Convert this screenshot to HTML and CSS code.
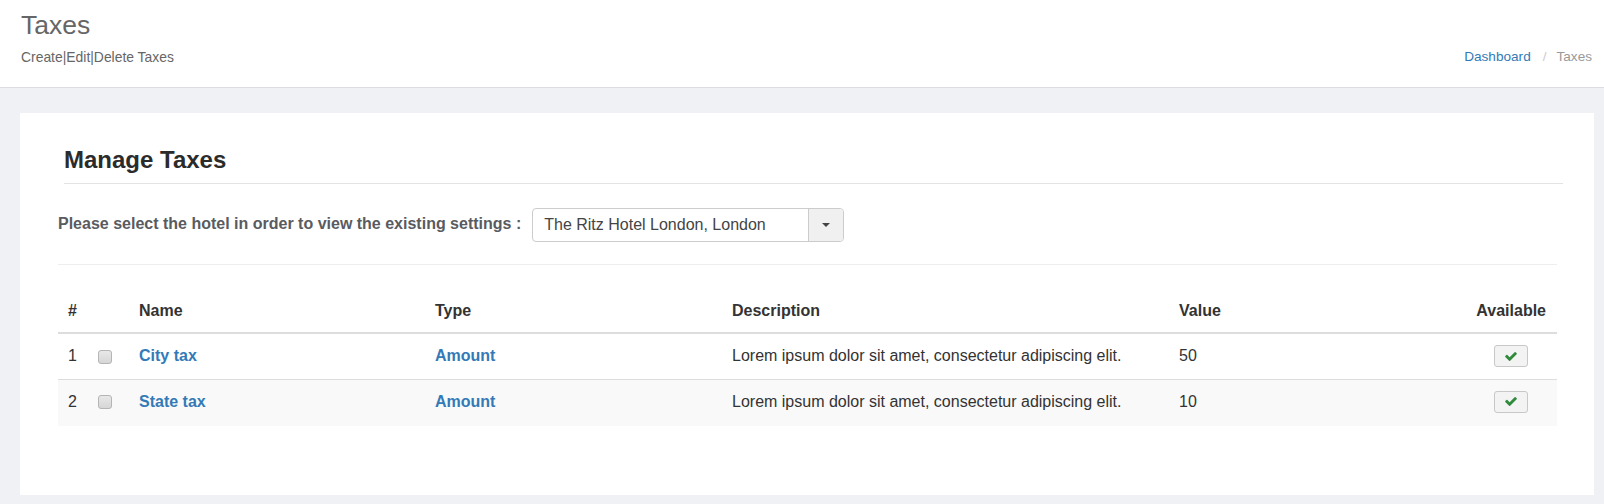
FILE: index.html
```html
<!DOCTYPE html>
<html lang="en">
<head>
<meta charset="UTF-8">
<title>Taxes</title>
<link rel="stylesheet" href="styles.css">
</head>
<body>

<header class="content-header">
  <div class="page-title">
    <h1>Taxes</h1>
    <p class="subtitle">Create|Edit|Delete Taxes</p>
  </div>
  <ol class="breadcrumb">
    <li><a href="#">Dashboard</a></li>
    <li class="sep">/</li>
    <li class="active">Taxes</li>
  </ol>
</header>

<section class="card">
  <h2 class="card-title">Manage Taxes</h2>

  <div class="hotel-row">
    <label class="hotel-label">Please select the hotel in order to view the existing settings :</label>
    <div class="hotel-select">
      <span class="hotel-value">The Ritz Hotel London, London</span>
      <span class="hotel-caret"><i class="caret"></i></span>
    </div>
  </div>

  <hr class="divider">

  <table class="tax-table">
    <colgroup>
      <col class="c-num">
      <col class="c-check">
      <col class="c-name">
      <col class="c-type">
      <col class="c-desc">
      <col class="c-value">
      <col>
    </colgroup>
    <thead>
      <tr>
        <th>#</th>
        <th></th>
        <th>Name</th>
        <th>Type</th>
        <th>Description</th>
        <th>Value</th>
        <th class="right">Available</th>
      </tr>
    </thead>
    <tbody>
      <tr>
        <td>1</td>
        <td><input type="checkbox" class="row-check"></td>
        <td><a href="#" class="link">City tax</a></td>
        <td><a href="#" class="link">Amount</a></td>
        <td>Lorem ipsum dolor sit amet, consectetur adipiscing elit.</td>
        <td>50</td>
        <td class="right"><button class="btn-avail"><svg viewBox="121 334 1550 1188" width="12" height="9"><path d="M1671 566q0 40-28 68l-724 724-136 136q-28 28-68 28t-68-28l-136-136-362-362q-28-28-28-68t28-68l136-136q28-28 68-28t68 28l294 295 656-657q28-28 68-28t68 28l136 136q28 28 28 68z"/></svg></button></td>
      </tr>
      <tr>
        <td>2</td>
        <td><input type="checkbox" class="row-check"></td>
        <td><a href="#" class="link">State tax</a></td>
        <td><a href="#" class="link">Amount</a></td>
        <td>Lorem ipsum dolor sit amet, consectetur adipiscing elit.</td>
        <td>10</td>
        <td class="right"><button class="btn-avail"><svg viewBox="121 334 1550 1188" width="12" height="9"><path d="M1671 566q0 40-28 68l-724 724-136 136q-28 28-68 28t-68-28l-136-136-362-362q-28-28-28-68t28-68l136-136q28-28 68-28t68 28l294 295 656-657q28-28 68-28t68 28l136 136q28 28 28 68z"/></svg></button></td>
      </tr>
    </tbody>
  </table>
</section>

</body>
</html>
```

FILE: styles.css
```css
body {
  margin: 0;
  background: #f0f1f5;
  font-family: "Liberation Sans", Arial, sans-serif;
  font-size: 16px;
  color: #333;
}

a {
  text-decoration: none;
}

.content-header {
  display: flex;
  justify-content: space-between;
  align-items: flex-end;
  height: 88px;
  box-sizing: border-box;
  padding: 10px 12px 20px 21px;
  background: #fff;
  border-bottom: 1px solid #dcdde1;
}

.page-title h1 {
  margin: 0;
  font-size: 26.5px;
  font-weight: normal;
  line-height: 28px;
  color: #666;
}

.subtitle {
  margin: 8px 0 0;
  font-size: 13.9px;
  line-height: 20px;
  color: #666;
}

.breadcrumb {
  display: flex;
  margin: 0;
  padding: 0;
  list-style: none;
  font-size: 13.6px;
  line-height: 20px;
}

.breadcrumb a {
  color: #337ab7;
}

.breadcrumb .sep {
  color: #ccc;
  padding: 0 10px 0 12px;
}

.breadcrumb .active {
  color: #999;
}

.card {
  margin: 25px 10px 0 20px;
  height: 382px;
  box-sizing: border-box;
  padding: 34px 37px 0 38px;
  background: #fff;
}

.card-title {
  margin: 0 -6px 0 6px;
  padding-bottom: 10px;
  border-bottom: 1px solid #e3e3e3;
  font-size: 24px;
  line-height: 26.4px;
  color: #2b2b2b;
}

.hotel-row {
  display: flex;
  align-items: flex-start;
  gap: 11px;
  margin-top: 24px;
}

.hotel-label {
  margin-top: 6px;
  font-weight: bold;
  line-height: 20px;
  color: #595b5f;
}

.hotel-select {
  display: flex;
  width: 312px;
  height: 34px;
  box-sizing: border-box;
  border: 1px solid #ccc;
  border-radius: 4px;
  overflow: hidden;
}

.hotel-value {
  flex: 1;
  padding-left: 11px;
  line-height: 32px;
  color: #444;
}

.hotel-caret {
  display: flex;
  align-items: center;
  justify-content: center;
  width: 34px;
  background: #f0f0f0;
  border-left: 1px solid #ccc;
}

.caret {
  width: 0;
  height: 0;
  border-top: 4px solid #444;
  border-left: 4px solid transparent;
  border-right: 4px solid transparent;
}

.divider {
  margin: 22px 0 0;
  border: 0;
  border-top: 1px solid #eee;
}

.tax-table {
  width: 100%;
  margin-top: 23px;
  border-collapse: collapse;
  table-layout: fixed;
}

.c-num { width: 30px; }
.c-check { width: 41px; }
.c-name { width: 296px; }
.c-type { width: 297px; }
.c-desc { width: 447px; }
.c-value { width: 240px; }

.tax-table th {
  padding: 13px 11px 11px 10px;
  line-height: 20px;
  text-align: left;
  border-bottom: 2px solid #ddd;
}

.tax-table td {
  padding: 10px 11px 12px 10px;
  line-height: 22px;
}

.tax-table tbody tr + tr td {
  border-top: 1px solid #ddd;
  padding-bottom: 13px;
}

.tax-table tbody tr:nth-child(even) {
  background: #f9f9f9;
}

.tax-table .right {
  text-align: right;
}

.link {
  color: #337ab7;
  font-weight: bold;
}

.row-check {
  appearance: none;
  width: 14px;
  height: 14px;
  margin: 0;
  vertical-align: middle;
  border: 1px solid #b5b5b5;
  border-radius: 3px;
  background: linear-gradient(#e8e8e8, #d6d6d6);
}

.btn-avail {
  width: 34px;
  height: 22px;
  margin-right: 18px;
  padding: 0;
  vertical-align: middle;
  background: #f3f3f3;
  border: 1px solid #c8c8c8;
  border-radius: 3px;
}

.btn-avail svg {
  display: block;
  margin: 0 auto;
  fill: #2f8a3b;
}
```
